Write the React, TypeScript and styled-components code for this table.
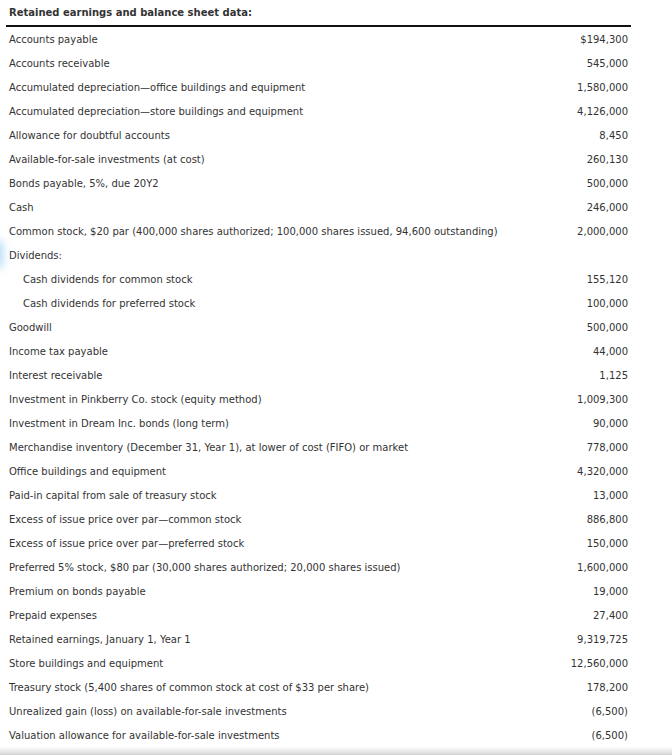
import React from 'react';
import styled, { createGlobalStyle } from 'styled-components';

const GlobalStyle = createGlobalStyle`
  html, body {
    margin: 0;
    padding: 0;
    background: #fff;
  }
  body {
    font-family: "DejaVu Sans", Verdana, sans-serif;
    font-size: 10px;
    color: #333;
  }
`;

const Page = styled.div`
  position: relative;
  width: 672px;
  height: 755px;
  overflow: hidden;
  background: #fff;
`;

const Wrapper = styled.div`
  padding-left: 6px;
  width: 625px;
`;

const Table = styled.table`
  width: 625px;
  border-collapse: collapse;
  font-size: 10px;
`;

const HeadCell = styled.th`
  text-align: left;
  font-weight: bold;
  height: 26px;
  padding: 0 3px;
  border-bottom: 2px solid #111;
  box-sizing: border-box;
  vertical-align: middle;
`;

const Label = styled.td<{ $indent?: boolean }>`
  height: 24px;
  padding: 0 3px 0 ${(p) => (p.$indent ? '17px' : '3px')};
  white-space: nowrap;
  vertical-align: middle;
`;

const Amount = styled.td`
  height: 24px;
  padding: 0 3px;
  text-align: right;
  white-space: nowrap;
  vertical-align: middle;
`;

const Glow = styled.div`
  position: absolute;
  left: -6px;
  top: 243px;
  width: 6px;
  height: 22px;
  border-radius: 4px;
  box-shadow: 0 0 8px 3px rgba(120, 190, 240, 0.55);
`;

const BottomShade = styled.div`
  position: absolute;
  left: 0;
  right: 0;
  bottom: 0;
  height: 8px;
  background: linear-gradient(#ffffff, #d4d4d4);
`;

type Row = { label: string; amount?: string; indent?: boolean };

const rows: Row[] = [
  { label: 'Accounts payable', amount: '$194,300' },
  { label: 'Accounts receivable', amount: '545,000' },
  { label: 'Accumulated depreciation\u2014office buildings and equipment', amount: '1,580,000' },
  { label: 'Accumulated depreciation\u2014store buildings and equipment', amount: '4,126,000' },
  { label: 'Allowance for doubtful accounts', amount: '8,450' },
  { label: 'Available-for-sale investments (at cost)', amount: '260,130' },
  { label: 'Bonds payable, 5%, due 20Y2', amount: '500,000' },
  { label: 'Cash', amount: '246,000' },
  {
    label: 'Common stock, $20 par (400,000 shares authorized; 100,000 shares issued, 94,600 outstanding)',
    amount: '2,000,000',
  },
  { label: 'Dividends:' },
  { label: 'Cash dividends for common stock', amount: '155,120', indent: true },
  { label: 'Cash dividends for preferred stock', amount: '100,000', indent: true },
  { label: 'Goodwill', amount: '500,000' },
  { label: 'Income tax payable', amount: '44,000' },
  { label: 'Interest receivable', amount: '1,125' },
  { label: 'Investment in Pinkberry Co. stock (equity method)', amount: '1,009,300' },
  { label: 'Investment in Dream Inc. bonds (long term)', amount: '90,000' },
  { label: 'Merchandise inventory (December 31, Year 1), at lower of cost (FIFO) or market', amount: '778,000' },
  { label: 'Office buildings and equipment', amount: '4,320,000' },
  { label: 'Paid-in capital from sale of treasury stock', amount: '13,000' },
  { label: 'Excess of issue price over par\u2014common stock', amount: '886,800' },
  { label: 'Excess of issue price over par\u2014preferred stock', amount: '150,000' },
  { label: 'Preferred 5% stock, $80 par (30,000 shares authorized; 20,000 shares issued)', amount: '1,600,000' },
  { label: 'Premium on bonds payable', amount: '19,000' },
  { label: 'Prepaid expenses', amount: '27,400' },
  { label: 'Retained earnings, January 1, Year 1', amount: '9,319,725' },
  { label: 'Store buildings and equipment', amount: '12,560,000' },
  { label: 'Treasury stock (5,400 shares of common stock at cost of $33 per share)', amount: '178,200' },
  { label: 'Unrealized gain (loss) on available-for-sale investments', amount: '(6,500)' },
  { label: 'Valuation allowance for available-for-sale investments', amount: '(6,500)' },
];

export default function App() {
  return (
    <Page>
      <GlobalStyle />
      <Glow />
      <Wrapper>
        <Table>
          <thead>
            <tr>
              <HeadCell colSpan={2}>Retained earnings and balance sheet data:</HeadCell>
            </tr>
          </thead>
          <tbody>
            {rows.map((r) => (
              <tr key={r.label}>
                <Label $indent={r.indent}>{r.label}</Label>
                <Amount>{r.amount ?? ''}</Amount>
              </tr>
            ))}
          </tbody>
        </Table>
      </Wrapper>
      <BottomShade />
    </Page>
  );
}
